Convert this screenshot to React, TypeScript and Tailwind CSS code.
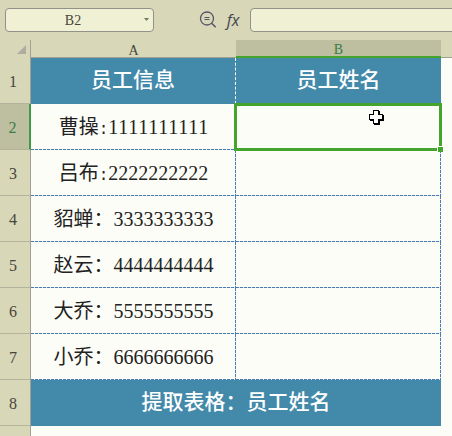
import clsx from "clsx";

interface SheetRow {
  id: number;
  name: string;
  colon: string;
  code: string;
}

const rows: SheetRow[] = [
  { id: 2, name: "曹操", colon: ":", code: "1111111111" },
  { id: 3, name: "吕布", colon: ":", code: "2222222222" },
  { id: 4, name: "貂蝉", colon: "：", code: "3333333333" },
  { id: 5, name: "赵云", colon: "：", code: "4444444444" },
  { id: 6, name: "大乔", colon: "：", code: "5555555555" },
  { id: 7, name: "小乔", colon: "：", code: "6666666666" },
];

const SELECTED_ROW = 2;

const titleCell = "bg-[#4289aa] p-0 text-center text-[21px] font-medium text-white";
const dashBottom =
  "bg-[repeating-linear-gradient(90deg,#4a7cb0_0_3px,#dce6f0_3px_4px)] bg-[length:100%_1px] bg-bottom bg-no-repeat";
const dashRight =
  "after:absolute after:inset-y-0 after:right-0 after:w-px after:bg-[repeating-linear-gradient(180deg,#4a7cb0_0_3px,#dce6f0_3px_4px)]";

function FormulaBar() {
  return (
    <div className="flex h-10 items-center pb-px">
      <div className="ml-[5px] flex h-6 w-[149px] shrink-0 items-center rounded-[4px] border border-[#92918a] bg-[#f0f0d4] pr-1">
        <input
          aria-label="Name box"
          defaultValue="B2"
          className="w-full min-w-0 bg-transparent pr-1 pt-0.5 text-center font-['Liberation_Serif',serif] text-sm text-[#46463c] outline-none"
        />
        <button type="button" aria-label="Defined names">
          <svg width="5" height="3" viewBox="0 0 5 3" fill="#77776c">
            <path d="M0 0h5L2.500 3z" />
          </svg>
        </button>
      </div>
      <button type="button" aria-label="Zoom out" className="ml-[45px] shrink-0">
        <svg width="18" height="18" viewBox="0 0 18 18" fill="none" stroke="#55556a">
          <circle cx="8" cy="7.500" r="6.500" strokeWidth="1.300" />
          <path d="M12.700 12.200l4 4" strokeWidth="1.600" />
          <path d="M5.500 6.500h5M5.500 8.500h5" strokeWidth="1.100" />
        </svg>
      </button>
      <button
        type="button"
        aria-label="Insert function"
        className="ml-2 w-4 shrink-0 font-['Open_Sans',sans-serif] text-base italic text-[#46464e]"
      >
        fx
      </button>
      <input
        aria-label="Formula"
        className="-mr-1 ml-[9px] h-6 min-w-0 flex-1 rounded-[4px] border border-[#92918a] bg-[#f0f0d4] px-2 outline-none"
      />
    </div>
  );
}

function RowHeader({ id }: { id: number }) {
  const selected = id === SELECTED_ROW;
  return (
    <th
      scope="row"
      className={clsx(
        "border-b border-b-[#b4b49c] p-0 pr-1 pt-0.5 text-center text-base font-normal",
        selected
          ? "border-r-2 border-r-[#3f9a48] bg-[#bebea0] text-[#3a7d45]"
          : "border-r border-r-[#a0a094] bg-[#d8d7b8] text-[#46463c]"
      )}
    >
      {id}
    </th>
  );
}

function CellCursor() {
  return (
    <svg
      className="absolute left-[131px] top-[3px]"
      width="16"
      height="16"
      viewBox="0 0 16 16"
      shapeRendering="crispEdges"
    >
      <path d="M6 2h6v4h4v6h-4v4H6v-4H2V6h4z" fill="#000" />
      <path
        d="M5.500 1.500h5v4h4v5h-4v4h-5v-4h-4v-5h4z"
        fill="#fff"
        stroke="#000"
      />
    </svg>
  );
}

function Sheet() {
  return (
    <table className="w-full table-fixed border-separate border-spacing-0">
      <colgroup>
        <col className="w-[31px]" />
        <col className="w-[205px]" />
        <col className="w-[205px]" />
        <col />
      </colgroup>
      <thead>
        <tr className="h-[18px] bg-[#d8d7b8] font-['Liberation_Serif',serif] text-sm leading-4 text-[#46463c]">
          <td className="border-r border-[#a0a094] p-0">
            <svg className="ml-auto mr-1" width="9" height="9" viewBox="0 0 9 9" fill="#adada2">
              <path d="M9 0v9H0z" />
            </svg>
          </td>
          <th scope="col" className="border-b border-[#a0a094] p-0 pt-1 font-normal leading-3">
            A
          </th>
          <th
            scope="col"
            className="border-b-2 border-[#44a52c] bg-[#bebea0] p-0 pt-1 font-normal leading-3 text-[#3a7d45]"
          >
            B
          </th>
          <td className="border-b border-[#a0a094] p-0" />
        </tr>
      </thead>
      <tbody className="font-['Liberation_Serif','Noto_Sans_CJK_SC',serif] text-xl text-[#222] [font-kerning:none]">
        <tr className="h-[46px]">
          <RowHeader id={1} />
          <td className={clsx("border-r border-dashed border-white", titleCell)}>
            员工信息
          </td>
          <td className={titleCell}>员工姓名</td>
          <td />
        </tr>
        {rows.map((row) => (
          <tr key={row.id} className="h-[46px]">
            <RowHeader id={row.id} />
            <td className={clsx("relative p-0 text-center", dashBottom, dashRight)}>
              {row.name}
              {row.colon === ":" ? (
                <span className="font-['Liberation_Mono',monospace] text-base">:</span>
              ) : (
                row.colon
              )}
              {row.code}
            </td>
            <td className={clsx("relative p-0", dashBottom, dashRight)}>
              {row.id === SELECTED_ROW && (
                <div className="absolute -bottom-px -left-0.5 -right-px -top-px z-10 border-3 border-[#44a52c]">
                  <CellCursor />
                  <span className="absolute -bottom-1 -right-1 size-1.5 border-l border-t border-white bg-[#44a52c]" />
                </div>
              )}
            </td>
            <td />
          </tr>
        ))}
        <tr className="h-[46px]">
          <RowHeader id={8} />
          <td colSpan={2} className={titleCell}>
            提取表格：员工姓名
          </td>
          <td />
        </tr>
        <tr className="h-[10px]">
          <td className="border-r border-[#a0a094] bg-[#d8d7b8]" />
          <td colSpan={3} />
        </tr>
      </tbody>
    </table>
  );
}

export default function App() {
  return (
    <main className="overflow-hidden bg-[#fdfdf8]">
      <header className="bg-[#d8d7b8]">
        <FormulaBar />
      </header>
      <Sheet />
    </main>
  );
}
